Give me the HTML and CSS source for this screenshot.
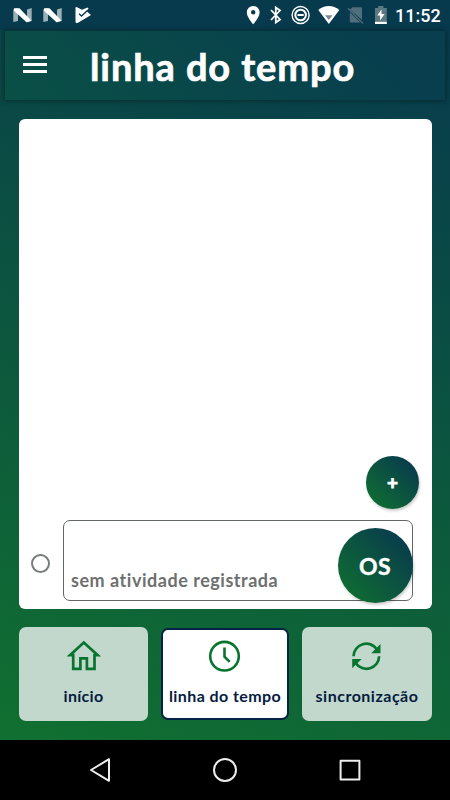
FILE: index.html
```html
<!DOCTYPE html>
<html lang="pt-BR">
<head>
<meta charset="utf-8">
<title>linha do tempo</title>
<link rel="stylesheet" href="styles.css">
</head>
<body>
<div class="phone">
  <div class="status">
    <svg class="status-icons" width="390" height="30" viewBox="0 0 390 30" fill="#fff">
      <g id="n"><path d="M13.300 9.500L18 8v13l-4.700 1zM27 9.500l4.700-1.500v13L27 22.300z" opacity=".6"/><path d="M14 8.300h5.500L31.500 20.700l-5 1.600L14 10.800z"/></g>
      <use href="#n" x="30"/>
      <path d="M75.500 8q0-1.500 1.500-.8l5 2.500 5.500-2.200 1 1-1.500 3L91 15 78 22.800q-2.500 1-2.500-1.300z"/>
      <path d="M79 13.800l2.500 2.200 6.500-6" fill="none" stroke="#083a4e" stroke-width="1.400"/>
      <path fill-rule="evenodd" d="M253.200 6a6.400 6.400 0 0 0-6.400 6.400c0 4.800 6.400 11.800 6.400 11.800s6.400-7 6.400-11.800A6.400 6.400 0 0 0 253.200 6zm0 8.500a2.200 2.200 0 1 1 0-4.400 2.200 2.200 0 0 1 0 4.400z"/>
      <path d="M271 10l9 9.500-4.200 3V7.500l4.200 3-9 9.500" fill="none" stroke="#fff" stroke-width="1.800"/>
      <g fill="none" stroke="#fff"><circle cx="300.600" cy="15" r="8.500" stroke-width="1.400"/><circle cx="300.600" cy="15" r="5.300" stroke-width="2"/><path d="M297.500 15h6.200" stroke-width="2"/></g>
      <path d="M318.300 10c6-5.300 15-5.300 21 0L328.800 24z"/>
      <path d="M325 15.200h7.600L328.800 20z" fill="#788a90"/>
      <g fill="#506e7b"><path d="M352.500 7.200H361q1 0 1 1V20L350 9.500zM349.800 12l10.500 10.500h-9.500q-1 0-1-1z"/><path d="M348 8.200l15 15.300" stroke="#506e7b" stroke-width="1.300"/></g>
      <path d="M375 8h3.200V6h5.200v2h3.400v14H375z" fill="#5c7883"/><path d="M375 21.800h11.800V24H375z"/><path d="M381.500 9.500l-4.300 6h2.900v5l4.500-6.500h-3.100z"/>
    </svg>
    <span class="time">11:52</span>
  </div>
  <main class="app">
    <header class="header">
      <div class="menu"><i></i><i></i><i></i></div>
      <h1 class="title">linha do tempo</h1>
    </header>
    <section class="panel">
      <button class="round add"><span>+</span></button>
      <div class="entry">
        <span class="dot"></span>
        <div class="card">
          <span class="empty">sem atividade registrada</span>
          <button class="round os"><span>OS</span></button>
        </div>
      </div>
    </section>
    <nav class="tabs">
      <div class="tab">
        <svg width="36" height="34" viewBox="0 0 36 34" fill="none" stroke="#08752f" stroke-width="2.700"><path d="M4 16.200h3.200V29.800h7.200v-10.500h6.500v10.500h7.600V16.200h3.200L17.800 3.600z"/></svg>
        <span class="home">início</span>
      </div>
      <div class="tab active">
        <svg width="36" height="34" viewBox="0 0 36 34" fill="none" stroke="#08752f" stroke-width="2.600"><circle cx="17.500" cy="17.200" r="14.300"/><path d="M17.500 8.500v9.300l5.200 5.100"/></svg>
        <span class="timeline">linha do tempo</span>
      </div>
      <div class="tab">
        <svg width="36" height="34" viewBox="0 0 36 34"><g fill="none" stroke="#08752f" stroke-width="2.700"><path d="M4.600 17.200A12.700 12.700 0 0 1 27.800 10.200"/><path d="M30.100 17.200A12.700 12.700 0 0 1 6.900 24.200"/></g><path fill="#08752f" d="M31.500 5v9.300h-9.300zM3.200 20h9.500l-9.500 9.300z"/></svg>
        <span class="sync">sincronização</span>
      </div>
    </nav>
  </main>
  <footer class="system">
    <svg width="450" height="60" viewBox="0 0 450 60" fill="none" stroke="#eee" stroke-width="2" stroke-linejoin="round"><path d="M109 19.200v21.600L91 30z"/><circle cx="225" cy="30" r="11"/><rect x="340.600" y="20.800" width="18.800" height="18.800"/></svg>
  </footer>
</div>
</body>
</html>
```
FILE: styles.css
```css
* { box-sizing: border-box; }
body { margin: 0; font-family: Lato, "Noto Sans", sans-serif; }
.phone { width: 450px; height: 800px; display: flex; flex-direction: column; overflow: hidden; background: #000; }
.status { height: 30px; display: flex; background: #083a4e; color: #fff; }
.time { margin-left: 5px; font: 500 18px/32px Roboto, sans-serif; white-space: nowrap; }
.app { height: 710px; display: flex; flex-direction: column; background: linear-gradient(20deg, #107030, #083a4e); }
.header { height: 69px; margin: 1px 5px 0; padding-left: 18px; display: flex; background: linear-gradient(45deg, #0a5046, #083e4e 85%); box-shadow: 0 0 5px 1px rgba(0, 25, 20, .5); }
.menu { width: 24px; padding-top: 25px; display: flex; flex-direction: column; gap: 4px; }
.menu i { height: 3px; background: #fff; }
.title { margin: 0 0 0 43px; color: #fff; font-size: 38px; line-height: 71px; font-weight: 700; letter-spacing: .9px; white-space: nowrap; -webkit-text-stroke: .7px #fff; }
.panel { height: 490px; margin: 19px 18px 0 19px; padding: 337px 13px 8px 12px; border-radius: 6px; background: #fff; display: flex; flex-direction: column; }
.round { border: 0; padding: 0; border-radius: 50%; display: flex; align-items: center; justify-content: center; color: #fff; font-family: inherit; font-weight: 700; background: linear-gradient(45deg, #107030 5%, #083a4e 90%); box-shadow: 1px 2px 3px rgba(0, 0, 0, .2); flex: none; }
.add { width: 53px; height: 53px; align-self: flex-end; font-size: 19px; -webkit-text-stroke: .8px #fff; }
.entry { display: flex; margin-top: 11px; align-items: center; }
.dot { width: 19px; height: 19px; border: 2px solid #777b7a; border-radius: 50%; margin-top: 5px; flex: none; }
.card { width: 350px; height: 81px; margin-left: 12.500px; border: 1px solid #626766; border-radius: 7px; padding-left: 7.500px; display: flex; justify-content: space-between; flex: none; }
.empty { align-self: flex-end; margin-bottom: 9px; color: #6e706f; font-size: 18px; line-height: 22px; font-weight: 700; letter-spacing: .52px; white-space: nowrap; }
.os { width: 75px; height: 75px; margin: 7px -1px 0 0; font-size: 23px; letter-spacing: .3px; -webkit-text-stroke: .4px #fff; }
.tabs { display: flex; justify-content: space-between; margin: 18px 18px 0 19px; height: 94px; }
.tab { width: 129px; height: 94px; border-radius: 7px; background: #c3d8cd; display: flex; flex-direction: column; align-items: center; padding-top: 12px; color: #051c40; font-size: 16px; line-height: 20px; font-weight: 700; white-space: nowrap; }
.tab svg { margin-bottom: 13px; }
.tab:last-child { width: 130px; }
.home { letter-spacing: .3px; }
.timeline { letter-spacing: .42px; }
.sync { letter-spacing: .5px; }
.active { width: 128px; height: 92px; margin: 1px 0 0; padding-top: 9px; border: 2px solid #052346; background: #fff; }
.system { height: 60px; }
.system svg { display: block; }
```
